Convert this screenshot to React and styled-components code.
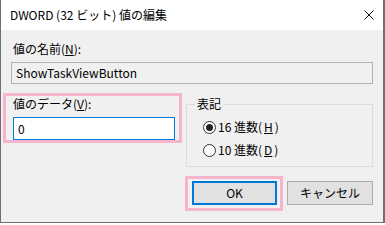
import React from 'react';
import styled, { createGlobalStyle } from 'styled-components';

const GlobalStyle = createGlobalStyle`
	html, body {
		margin: 0;
		padding: 0;
		background: #ffffff;
	}
	* {
		box-sizing: border-box;
	}
`;

const font = `'Noto Sans CJK JP', 'Noto Sans', sans-serif`;

const Window = styled.div`
	width: 385px;
	height: 223px;
	background: #f0f0f0;
	border-left: 1px solid #6f6f6f;
	border-right: 2px solid #6f6f6f;
	border-bottom: 1px solid #6f6f6f;
	font-family: ${font};
	font-size: 12px;
	color: #000;
	display: flex;
	flex-direction: column;
`;

const TitleBar = styled.div`
	height: 30px;
	background: #ffffff;
	display: flex;
	align-items: center;
	justify-content: space-between;
	padding: 0 8px 0 9px;
	font-size: 12px;
	line-height: 16px;
`;

const CloseIcon = styled.svg`
	width: 10px;
	height: 10px;
	margin-right: 1px;
`;

const Body = styled.div`
	flex: 1;
	display: flex;
	flex-direction: column;
	padding: 11px 10px 0 1px;
`;

const Label = styled.div`
	line-height: 16px;
	height: 16px;
	padding-left: ${(p) => p.$indent || 0}px;
	white-space: nowrap;
`;

const NameSection = styled.div`
	margin-left: 9px;
	display: flex;
	flex-direction: column;
`;

const TextBox = styled.div`
	height: ${(p) => p.$h}px;
	margin-top: 5px;
	border: ${(p) => (p.$active ? '1px solid #0078d7' : '1px solid #b4b4b4')};
	background: ${(p) => (p.$active ? '#ffffff' : '#f0f0f0')};
	display: flex;
	align-items: center;
	padding-left: 4px;
	line-height: 16px;
`;

const Row = styled.div`
	display: flex;
	margin-top: 9px;
	align-items: flex-start;
`;

const Highlight = styled.div`
	border: 3px solid #f6b5cd;
	padding: ${(p) => p.$pad};
	margin-left: ${(p) => p.$ml || 0}px;
	display: flex;
	flex-direction: column;
`;

const DataSection = styled(Highlight)`
	width: 179px;
`;

const GroupBox = styled.fieldset`
	margin: 3px 0 0 4px;
	flex: 1;
	height: 71px;
	border: 1px solid #dcdcdc;
	padding: 7px 0 8px 16px;
	display: flex;
	flex-direction: column;
	gap: 7px;
	min-width: 0;

	legend {
		margin-left: -8px;
		padding: 0 2px;
		line-height: 16px;
	}
`;

const RadioRow = styled.label`
	display: flex;
	align-items: center;
	height: 16px;
	line-height: 16px;
	gap: 2px;
`;

const RadioCircle = styled.span`
	width: 13px;
	height: 13px;
	border-radius: 50%;
	border: 1px solid #333;
	background: #fff;
	display: flex;
	align-items: center;
	justify-content: center;

	&::after {
		content: '';
		width: 7px;
		height: 7px;
		border-radius: 50%;
		background: ${(p) => (p.$checked ? '#222' : 'transparent')};
	}
`;

const ButtonRow = styled.div`
	display: flex;
	justify-content: flex-end;
	align-items: flex-start;
	margin-top: 9px;
	gap: 4px;
`;

const Button = styled.div`
	width: ${(p) => p.$w}px;
	height: 24px;
	margin-top: ${(p) => p.$mt || 0}px;
	background: #e1e1e1;
	border: ${(p) => (p.$default ? '2px solid #0078d7' : '1px solid #adadad')};
	display: flex;
	align-items: center;
	justify-content: center;
	line-height: 16px;
`;

export default function App() {
	return (
		<>
			<GlobalStyle />
			<Window>
				<TitleBar>
					<span>DWORD (32 ビット) 値の編集</span>
					<CloseIcon viewBox="0 0 10 10">
						<path d="M0.5 0.5 L9.5 9.5 M9.5 0.5 L0.5 9.5" stroke="#111" strokeWidth="1" fill="none" />
					</CloseIcon>
				</TitleBar>
				<Body>
					<NameSection>
						<Label $indent={2}>
							値の名前(<u>N</u>):
						</Label>
						<TextBox $h={22}>ShowTaskViewButton</TextBox>
					</NameSection>
					<Row>
						<DataSection $pad="0 4px 0 7px" $ml={1}>
							<Label $indent={0}>
								値のデータ(<u>V</u>):
							</Label>
							<TextBox $h={23} $active>
								0
							</TextBox>
						</DataSection>
						<GroupBox>
							<legend>表記</legend>
							<RadioRow>
								<RadioCircle $checked />
								16 進数(<u>H</u>)
							</RadioRow>
							<RadioRow>
								<RadioCircle />
								10 進数(<u>D</u>)
							</RadioRow>
						</GroupBox>
					</Row>
					<ButtonRow>
						<Highlight $pad="2px 3px 3px 4px">
							<Button $w={85} $default>
								OK
							</Button>
						</Highlight>
						<Button $w={86} $mt={5}>
							キャンセル
						</Button>
					</ButtonRow>
				</Body>
			</Window>
		</>
	);
}
